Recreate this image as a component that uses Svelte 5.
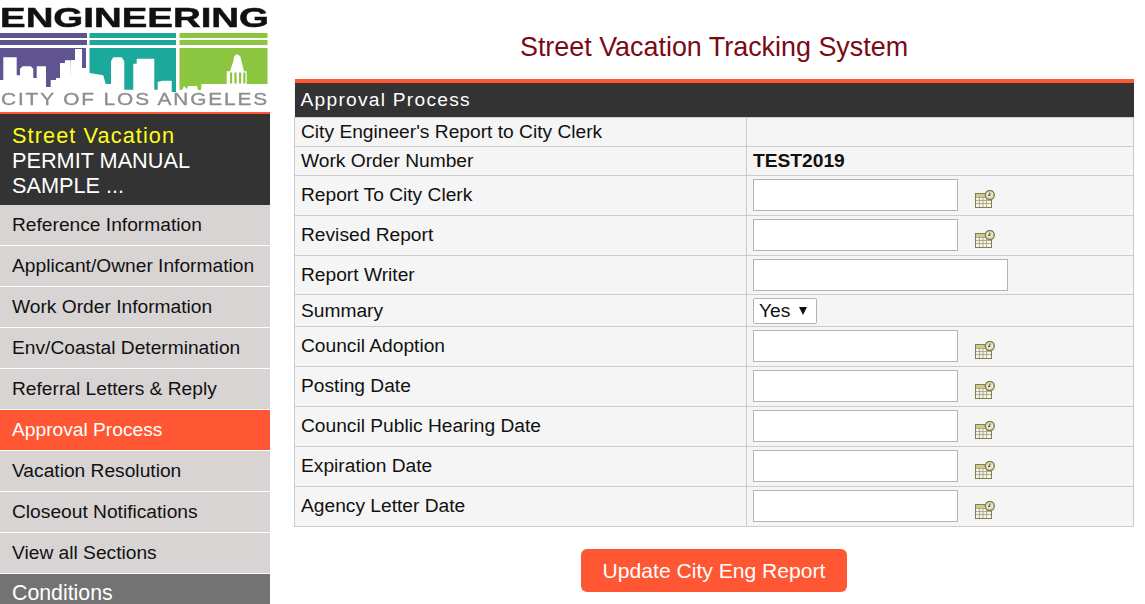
<script>
	const navItems = [
		'Reference Information',
		'Applicant/Owner Information',
		'Work Order Information',
		'Env/Coastal Determination',
		'Referral Letters & Reply',
		'Approval Process',
		'Vacation Resolution',
		'Closeout Notifications',
		'View all Sections'
	];

	const rows = [
		{ label: "City Engineer's Report to City Clerk", kind: 'text', value: '' },
		{ label: 'Work Order Number', kind: 'text', value: 'TEST2019' },
		{ label: 'Report To City Clerk', kind: 'date' },
		{ label: 'Revised Report', kind: 'date' },
		{ label: 'Report Writer', kind: 'input' },
		{ label: 'Summary', kind: 'select' },
		{ label: 'Council Adoption', kind: 'date' },
		{ label: 'Posting Date', kind: 'date' },
		{ label: 'Council Public Hearing Date', kind: 'date' },
		{ label: 'Expiration Date', kind: 'date' },
		{ label: 'Agency Letter Date', kind: 'date' }
	];
</script>

<div class="page">
	<aside class="sidebar">
		<svg class="logo" viewBox="0 0 270 112" role="img" aria-label="Engineering, City of Los Angeles">
			<text class="logo-top" x="0" y="27" textLength="269" lengthAdjust="spacingAndGlyphs">ENGINEERING</text>

			<!-- purple -->
			<rect x="0" y="33" width="87" height="5" fill="#5f5490" />
			<rect x="0" y="40" width="87" height="5" fill="#5f5490" />
			<polygon
				fill="#5f5490"
				points="0,48 86,48 86,68 82,68 82,49 75,49 75,60 71,60 71,80 70.7,60.3 65,60.3 65,63 60,63 60,78 56,78 56,80 50.7,80 50.7,87 46,87 46,66.3 36.7,66.3 36.7,78 33.3,78 33.3,68.7 30.7,66.3 22.7,66.3 20,68.7 20,75.3 16.7,75.3 16.7,57.3 3.3,57.3 3.3,80 0,80"
			/>

			<!-- teal -->
			<rect x="89.5" y="33" width="86.5" height="5" fill="#1aa99a" />
			<rect x="89.5" y="40" width="86.5" height="5" fill="#1aa99a" />
			<polygon
				fill="#1aa99a"
				points="89.5,48 176,48 176,92 171.7,92 171.7,80.7 162.3,80.7 157.7,82 157.7,89.7 154.3,89.7 154.3,58.7 136.7,58.7 136.7,63.7 133.3,63.7 133.3,89.7 124.3,89.7 124.3,61.3 121.7,57.3 113.3,57.3 111,61.3 111,84 105.7,84 103.3,75.3 89.5,73"
			/>

			<!-- green -->
			<rect x="179.5" y="33" width="88" height="5" fill="#8cc640" />
			<rect x="179.5" y="40" width="88" height="5" fill="#8cc640" />
			<polygon
				fill="#8cc640"
				points="179.5,48 267.5,48 267.5,84 201.5,84 201,90 198,90 197,86 188,86 187,89 184,86 182,90 179.5,90"
			/>
			<polygon
				fill="#fff"
				points="237,54 240.3,56.3 244,71.3 246.7,71.3 246.7,84 226.7,84 226.7,71.3 230,71.3 233.3,61.3 234.3,56.3"
			/>
			<rect x="230" y="72.5" width="2.2" height="11" fill="#8cc640" />
			<rect x="234.4" y="72.5" width="2.2" height="11" fill="#8cc640" />
			<rect x="239" y="72.5" width="2.2" height="11" fill="#8cc640" />
			<rect x="243.3" y="72.5" width="2.2" height="11" fill="#8cc640" />

			<text class="logo-bottom" x="1" y="105" textLength="268" lengthAdjust="spacingAndGlyphs">CITY OF LOS ANGELES</text>
		</svg>

		<div class="permit">
			<div class="permit-type">Street Vacation</div>
			<div>PERMIT MANUAL</div>
			<div>SAMPLE ...</div>
		</div>

		<nav class="nav">
			{#each navItems as item}
				<a class="nav-item" class:active={item === 'Approval Process'} href="#top">{item}</a>
			{/each}
			<a class="nav-item group" href="#top">Conditions</a>
		</nav>
	</aside>

	<main class="content">
		<h1 class="title">Street Vacation Tracking System</h1>

		<table class="form-table">
			<colgroup>
				<col class="label-col" />
				<col />
			</colgroup>
			<thead>
				<tr>
					<th colspan="2">Approval Process</th>
				</tr>
			</thead>
			<tbody>
				{#each rows as row}
					<tr class="row-{row.kind}">
						<td class="label">{row.label}</td>
						<td class="field">
							{#if row.kind === 'text'}
								<strong>{row.value}</strong>
							{:else if row.kind === 'input'}
								<input class="wide" type="text" />
							{:else if row.kind === 'select'}
								<span class="select-wrap">
									<select>
										<option>Yes</option>
										<option>No</option>
									</select>
								</span>
							{:else}
								<div class="date-field">
									<input type="text" />
									<svg class="cal" viewBox="0 0 20 18" aria-hidden="true">
										<rect x="0.5" y="3.5" width="16" height="14" fill="#f6f4e6" stroke="#7f7f52" />
										<rect x="1" y="4" width="15" height="3" fill="#cfc98a" />
										<path d="M1 7.5h15M1 10.5h15M1 13.5h15M4.5 7v10M8 7v10M11.5 7v10" stroke="#a5a58a" stroke-width="0.9" fill="none" />
										<circle cx="14.8" cy="5" r="4.5" fill="#e4e3c8" stroke="#7f7f52" stroke-width="1.4" />
										<path d="M14.8 2.6V5.4H13" stroke="#45452c" stroke-width="1" fill="none" />
									</svg>
								</div>
							{/if}
						</td>
					</tr>
				{/each}
			</tbody>
		</table>

		<div class="actions">
			<button type="button" class="update">Update City Eng Report</button>
		</div>
	</main>
</div>

<style>
	:global(body) {
		overflow: hidden;
		background: #fff;
	}

	.page {
		display: flex;
		height: 100vh;
		overflow: hidden;
		font-family: 'Liberation Sans', Arial, sans-serif;
		font-size: 19.2px;
		color: #111;
	}

	.sidebar {
		flex: 0 0 270px;
		width: 270px;
	}

	.logo {
		display: block;
		width: 270px;
		height: 112px;
		filter: blur(0.35px);
	}

	.logo-top {
		font-family: 'Liberation Sans', Arial, sans-serif;
		font-weight: 700;
		font-size: 28px;
		fill: #111;
		stroke: #111;
		stroke-width: 0.5px;
	}

	.logo-bottom {
		font-family: 'Liberation Sans', Arial, sans-serif;
		font-size: 16.5px;
		letter-spacing: 1.5px;
		fill: #8e8e8e;
		stroke: #8e8e8e;
		stroke-width: 0.35px;
	}

	.permit {
		box-sizing: border-box;
		height: 93px;
		border-top: 2px solid #ff5733;
		padding: 9px 12px 0;
		background: #333;
		color: #fff;
		font-size: 21.7px;
		line-height: 25px;
	}

	.permit-type {
		color: #ffff1a;
		letter-spacing: 1.1px;
	}

	.nav {
		display: flex;
		flex-direction: column;
	}

	.nav-item {
		display: block;
		height: 40px;
		line-height: 40px;
		padding: 0 12px;
		border-bottom: 1px solid #fff;
		background: #d8d4d4;
		color: #111;
		text-decoration: none;
		white-space: nowrap;
	}

	.nav-item.active {
		background: #ff5733;
		color: #fff;
	}

	.nav-item.group {
		background: #737373;
		color: #fff;
		font-size: 21.3px;
		line-height: 38px;
	}

	.content {
		flex: 1;
		min-width: 0;
		padding: 0 11px 0 24px;
	}

	.title {
		margin: 0;
		padding-top: 30px;
		height: 49px;
		box-sizing: content-box;
		text-align: center;
		font-size: 26.9px;
		line-height: 34px;
		font-weight: 400;
		color: #7a0a14;
	}

	.form-table {
		width: 100%;
		table-layout: fixed;
		border-collapse: collapse;
		background: #f5f5f5;
	}

	.label-col {
		width: 452px;
	}

	.form-table th {
		height: 34px;
		padding: 0 6px;
		border-top: 4px solid #ff5733;
		background: #333;
		color: #fff;
		font-size: 19.2px;
		font-weight: 400;
		letter-spacing: 1.25px;
		text-align: left;
	}

	.form-table td {
		padding: 0 6px;
		border: 1px solid #ccc;
	}

	.row-text td {
		height: 28px;
	}

	.row-date td {
		height: 37px;
		padding-bottom: 2px;
	}

	.row-input td {
		height: 38px;
	}

	.row-select td {
		height: 31px;
	}

	.date-field {
		display: flex;
		align-items: flex-start;
		gap: 17px;
	}

	input {
		display: block;
		box-sizing: border-box;
		width: 205px;
		height: 32px;
		margin: 0;
		border: 1px solid #b3b3b3;
		background: #fff;
	}

	input.wide {
		width: 255px;
	}

	.cal {
		width: 20px;
		height: 18px;
		margin-top: 11px;
		flex: none;
	}

	.select-wrap {
		display: block;
		position: relative;
		width: 64px;
	}

	.select-wrap::after {
		content: '';
		position: absolute;
		top: 9px;
		right: 10px;
		border-left: 4px solid transparent;
		border-right: 4px solid transparent;
		border-top: 8px solid #111;
		pointer-events: none;
	}

	select {
		display: block;
		box-sizing: border-box;
		appearance: none;
		width: 64px;
		height: 26px;
		padding: 0 0 0 5px;
		border: 1px solid #b3b3b3;
		border-radius: 2px;
		background: #fff;
		color: #111;
		font-family: inherit;
		font-size: 19.2px;
	}

	.actions {
		display: flex;
		justify-content: center;
		padding-top: 22px;
	}

	.update {
		width: 266px;
		height: 43px;
		border: 0;
		border-radius: 6px;
		background: #ff5733;
		color: #fff;
		font-family: inherit;
		font-size: 21.1px;
	}
</style>
